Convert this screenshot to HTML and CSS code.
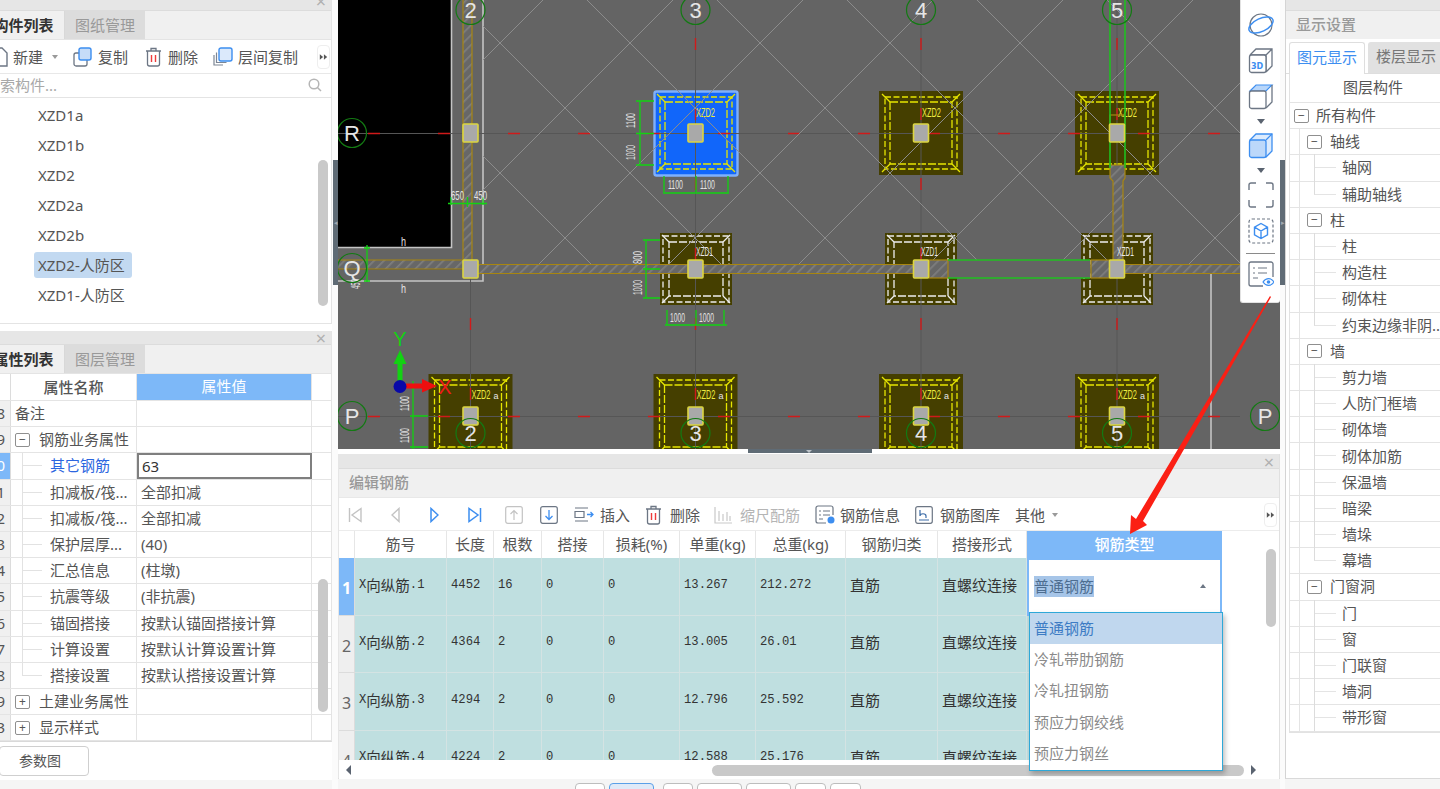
FILE: index.html
```html
<!DOCTYPE html>
<html lang="zh-CN">
<head>
<meta charset="utf-8">
<title>编辑钢筋</title>
<link rel="stylesheet" href="styles.css">
</head>
<body>
<div class="app">

  <aside class="left">
    <section class="panel comp-panel">
      <div class="strip strip-top"><span class="close">×</span></div>
      <div class="tabs">
        <div class="tab tab-on cut">构件列表</div>
        <div class="tab tab-off">图纸管理</div>
      </div>
      <div class="tools left-tools">
        <svg class="ic ic-new" viewBox="0 0 8 20"><path d="M-6 1H2l5 5v13H-6" fill="none" stroke="#6c7684" stroke-width="1.4"/></svg>
        <span class="tl">新建</span>
        <span class="tri"></span>
        <svg class="ic ic-copy" viewBox="0 0 19 20"><rect x="1" y="6" width="13" height="13" rx="2" fill="#fff" stroke="#6c7684" stroke-width="1.3"/><rect x="6" y="1" width="12" height="12" rx="2" fill="#c6dcf8" stroke="#3d8ef0" stroke-width="1.4"/></svg>
        <span class="tl">复制</span>
        <svg class="ic ic-trash" viewBox="0 0 17 20"><path d="M1 4h15M6 4V1.5h5V4M2.500 4v13a2 2 0 0 0 2 2h8a2 2 0 0 0 2-2V4" fill="none" stroke="#6c7684" stroke-width="1.3"/><path d="M6.500 8v7M10.500 8v7" stroke="#ee3a3a" stroke-width="1.4"/></svg>
        <span class="tl">删除</span>
        <svg class="ic ic-layer" viewBox="0 0 20 20"><path d="M1 8v10h9M3.500 5.500v10h10" fill="none" stroke="#7c8694" stroke-width="1.2"/><rect x="6" y="1" width="13" height="13" rx="2" fill="#dbe9fb" stroke="#3d8ef0" stroke-width="1.4"/></svg>
        <span class="tl">层间复制</span>
        <span class="more"><svg viewBox="0 0 11 7"><path d="M1 0L5 3.500L1 7ZM6 0L10 3.500L6 7Z" fill="#555"/></svg></span>
      </div>
      <div class="search">
        <span class="ph">搜索构件...</span>
        <svg class="ic-search" viewBox="0 0 14 14"><circle cx="6" cy="6" r="4.800" fill="none" stroke="#b5b5b5" stroke-width="1.5"/><path d="M9.500 9.500l3.500 3.500" stroke="#b5b5b5" stroke-width="1.5"/></svg>
      </div>
      <div class="comp-list">
        <div class="comp">XZD1a</div>
        <div class="comp">XZD1b</div>
        <div class="comp">XZD2</div>
        <div class="comp">XZD2a</div>
        <div class="comp">XZD2b</div>
        <div class="comp"><span class="chip">XZD2-人防区</span></div>
        <div class="comp">XZD1-人防区</div>
        <span class="thumb thumb-comp"></span>
      </div>
    </section>

    <section class="panel prop-panel">
      <div class="strip strip-prop"><span class="close">×</span></div>
      <div class="tabs">
        <div class="tab tab-on cut">属性列表</div>
        <div class="tab tab-off">图层管理</div>
      </div>
      <div class="props">
        <div class="prow phead"><div class="pn"></div><div class="pname pc">属性名称</div><div class="pval pv-head">属性值</div></div>
        <div class="prow"><div class="pn">8</div><div class="pname">备注</div><div class="pval"></div></div>
        <div class="prow"><div class="pn">9</div><div class="pname"><span class="tog">−</span><span class="gtext">钢筋业务属性</span></div><div class="pval"></div></div>
        <div class="prow"><div class="pn pn-on">0</div><div class="pname child first blue">其它钢筋</div><div class="pval pv-edit">63</div></div>
        <div class="prow"><div class="pn">1</div><div class="pname child">扣减板/筏...</div><div class="pval">全部扣减</div></div>
        <div class="prow"><div class="pn">2</div><div class="pname child">扣减板/筏...</div><div class="pval">全部扣减</div></div>
        <div class="prow"><div class="pn">3</div><div class="pname child">保护层厚...</div><div class="pval">(40)</div></div>
        <div class="prow"><div class="pn">4</div><div class="pname child">汇总信息</div><div class="pval">(柱墩)</div></div>
        <div class="prow"><div class="pn">5</div><div class="pname child">抗震等级</div><div class="pval">(非抗震)</div></div>
        <div class="prow"><div class="pn">6</div><div class="pname child">锚固搭接</div><div class="pval">按默认锚固搭接计算</div></div>
        <div class="prow"><div class="pn">7</div><div class="pname child">计算设置</div><div class="pval">按默认计算设置计算</div></div>
        <div class="prow"><div class="pn">8</div><div class="pname child last">搭接设置</div><div class="pval">按默认搭接设置计算</div></div>
        <div class="prow"><div class="pn">9</div><div class="pname"><span class="tog">+</span><span class="gtext">土建业务属性</span></div><div class="pval"></div></div>
        <div class="prow"><div class="pn">3</div><div class="pname"><span class="tog">+</span><span class="gtext">显示样式</span></div><div class="pval"></div></div>
        <span class="thumb thumb-prop"></span>
      </div>
    </section>
    <div class="btn-row"><button class="btn">参数图</button></div>
  </aside>

  <div class="gutter"><span class="grip">◂</span></div>

  <main class="center">
    <div class="viewport">
      <svg class="cad" viewBox="338 0 942 449" width="942" height="449">
        <defs>
          <pattern id="hatch" width="7" height="7" patternUnits="userSpaceOnUse" patternTransform="rotate(45)">
            <rect width="7" height="7" fill="#676767"/>
            <rect width="1.600" height="7" fill="#7f7f7f"/>
          </pattern>
          <clipPath id="latticeClip"><rect x="483" y="0" width="757" height="269"/></clipPath>
          <g id="marks2" fill="none" stroke="#e6e600" stroke-width="1.3">
            <rect x="-36" y="-36" width="72" height="72" stroke-dasharray="6 2.500"/>
            <rect x="-31" y="-31" width="62" height="62" stroke-dasharray="8 2"/>
            <path d="M-39-39l8 8M39-39l-8 8M-39 39l8-8M39 39l-8-8"/>
          </g>
          <g id="f2">
            <rect x="-42" y="-42" width="84" height="84" fill="#453f00"/>
            <use href="#marks2"/>
            <text class="lbl lbl-y" x="1" y="-16" textLength="19" lengthAdjust="spacingAndGlyphs">XZD2</text>
          </g>
          <g id="f2a">
            <rect x="-42" y="-42" width="84" height="84" fill="#453f00"/>
            <use href="#marks2"/>
            <text class="lbl lbl-y" x="1" y="-17" textLength="19" lengthAdjust="spacingAndGlyphs">XZD2</text>
            <text class="lbl lbl-a" x="23" y="-17">a</text>
          </g>
          <g id="f1">
            <rect x="-36" y="-36" width="72" height="72" fill="#453f00"/>
            <g fill="none" stroke="#eeeeee" stroke-width="1.300">
              <rect x="-33" y="-33" width="66" height="66" stroke-dasharray="6 2.500"/>
              <rect x="-27" y="-27" width="54" height="54" stroke-dasharray="8 2"/>
              <path d="M-34-34l7 7M34-34l-7 7M-34 34l7-7M34 34l-7-7"/>
            </g>
          </g>
          <rect id="col" x="-7.500" y="-9" width="15" height="18" rx="1" fill="#a9a9a9" stroke="#dcd640" stroke-width="1.600"/>
          <circle id="bub" r="14.500" fill="none" stroke="#137a13" stroke-width="1.200"/>
        </defs>

        <rect x="338" y="0" width="942" height="449" fill="#646464"/>

        <rect x="338" y="0" width="113" height="247" fill="#000"/>
        <path d="M451.500 0V247.500H338M483 0V281H338M1211 272V449" fill="none" stroke="#c4c4c4" stroke-width="1.600"/>

        <use href="#f2" x="921" y="133"/>
        <use href="#f2" x="1117" y="133"/>
        <use href="#f2a" x="470.500" y="416"/>
        <use href="#f2a" x="695.500" y="416"/>
        <use href="#f2a" x="921" y="416"/>
        <use href="#f2a" x="1117" y="416"/>
        <use href="#f1" x="696" y="269"/>
        <use href="#f1" x="921" y="269"/>
        <use href="#f1" x="1117" y="269"/>

        <rect x="654.500" y="91.500" width="83" height="84" rx="2" fill="#1166fa" stroke="#7fb0fb" stroke-width="2.400"/>
        <g transform="translate(696 133)">
          <use href="#marks2"/>
          <text class="lbl lbl-y" x="0" y="-16" textLength="19" lengthAdjust="spacingAndGlyphs">XZD2</text>
        </g>

        <path d="M338 133.500H1240M338 269.500H1240M338 416.500H1240M470.500 40V449M695.500 0V449M921 0V449M1117 0V449" stroke="#565656" stroke-width="1"/>
        <path d="M368 133.500H1240M368 416.500H1240M508 269.500H1240" stroke="#d01a1a" stroke-width="1.400" stroke-dasharray="12 58"/>
        <path d="M470.500 38V449M695.500 38V449M921 38V449M1117 38V449" stroke="#d01a1a" stroke-width="1.400" stroke-dasharray="12 58"/>

        <g clip-path="url(#latticeClip)" stroke="#8c8c8c" stroke-width="1" fill="none">
          <path d="M273 270L543 0M403 270L673 0M533 270L803 0M663 270L933 0M793 270L1063 0M923 270L1193 0M1053 270L1323 0M1183 270L1453 0"/>
          <path d="M327 0L597 270M457 0L727 270M587 0L857 270M717 0L987 270M847 0L1117 270M977 0L1247 270M1107 0L1377 270"/>
        </g>

        <rect x="463" y="0" width="9" height="269" fill="url(#hatch)"/>
        <rect x="338" y="260" width="132" height="9" fill="url(#hatch)"/>
        <rect x="470" y="264.500" width="770" height="9" fill="url(#hatch)"/>
        <rect x="948" y="260" width="142" height="18" fill="#646464"/>
        <path d="M463 0V260H338M472 0V269H338M472 264.500H948M472 273.500H948M1125 264.500H1240M1125 273.500H1240" fill="none" stroke="#a8860f" stroke-width="1.200"/>
        <rect x="929" y="260" width="19" height="18" fill="url(#hatch)" stroke="#a8860f" stroke-width="1.200"/>
        <rect x="1091" y="260" width="19" height="18" fill="url(#hatch)" stroke="#a8860f" stroke-width="1.200"/>
        <path d="M1113 260V181L1110 178V165H1125V178L1123 181V260Z" fill="url(#hatch)" stroke="#a8860f" stroke-width="1.200"/>
        <rect x="1110" y="115" width="15" height="10" fill="none" stroke="#a8860f" stroke-width="1.200"/>

        <path d="M1110 0V168M1125 0V168M948 260H1090M948 278H1090" stroke="#20c020" stroke-width="1.600" fill="none"/>

        <text class="lbl lbl-w" x="696" y="256" textLength="17" lengthAdjust="spacingAndGlyphs">XZD1</text>
        <text class="lbl lbl-w" x="921" y="256" textLength="17" lengthAdjust="spacingAndGlyphs">XZD1</text>
        <text class="lbl lbl-w" x="1117" y="256" textLength="17" lengthAdjust="spacingAndGlyphs">XZD1</text>

        <use href="#col" x="470.500" y="133"/>
        <use href="#col" x="470.500" y="269"/>
        <use href="#col" x="470.500" y="416"/>
        <use href="#col" x="695.500" y="133"/>
        <use href="#col" x="695.500" y="269"/>
        <use href="#col" x="695.500" y="416"/>
        <use href="#col" x="921" y="133"/>
        <use href="#col" x="921" y="269"/>
        <use href="#col" x="921" y="416"/>
        <use href="#col" x="1117" y="133"/>
        <use href="#col" x="1117" y="269"/>
        <use href="#col" x="1117" y="416"/>

        <g fill="none" stroke="#12d212" stroke-width="1.300">
          <path d="M640 101V165M636 101H654M636 133.500H654M636 165H654M664 176V192M696 176V192M728 176V192M663 193H729"/>
          <path d="M646 240V298M643 240H660M643 269H660M643 298H660M667 310V325M696 310V325M724 310V325M665 325H727"/>
          <path d="M451 205V197M483 205V197M448 203.500H487M467.500 197V207"/>
          <path d="M367 245V282M364 248H370M364 281H370"/>
          <path d="M413 381V449M410 416H428M410 447H428"/>
        </g>
        <g class="dim">
          <text x="668" y="189" textLength="15" lengthAdjust="spacingAndGlyphs">1100</text>
          <text x="700" y="189" textLength="15" lengthAdjust="spacingAndGlyphs">1100</text>
          <text x="670" y="322" textLength="15" lengthAdjust="spacingAndGlyphs">1000</text>
          <text x="699" y="322" textLength="15" lengthAdjust="spacingAndGlyphs">1000</text>
          <text x="451" y="200" textLength="13" lengthAdjust="spacingAndGlyphs">650</text>
          <text x="474" y="200" textLength="13" lengthAdjust="spacingAndGlyphs">450</text>
          <text x="-128" y="635" transform="rotate(-90)" textLength="15" lengthAdjust="spacingAndGlyphs">1100</text>
          <text x="-160" y="635" transform="rotate(-90)" textLength="15" lengthAdjust="spacingAndGlyphs">1000</text>
          <text x="-264" y="642" transform="rotate(-90)" textLength="13" lengthAdjust="spacingAndGlyphs">800</text>
          <text x="-295" y="642" transform="rotate(-90)" textLength="15" lengthAdjust="spacingAndGlyphs">1000</text>
          <text x="-411" y="409" transform="rotate(-90)" textLength="15" lengthAdjust="spacingAndGlyphs">1100</text>
          <text x="-443" y="409" transform="rotate(-90)" textLength="15" lengthAdjust="spacingAndGlyphs">1100</text>
          <text x="-289" y="360" transform="rotate(-90)" textLength="10" lengthAdjust="spacingAndGlyphs">450</text>
          <text x="401" y="246" textLength="5" lengthAdjust="spacingAndGlyphs">h</text>
          <text x="401" y="293" textLength="5" lengthAdjust="spacingAndGlyphs">h</text>
        </g>

        <g>
          <use href="#bub" x="470.500" y="10"/><use href="#bub" x="695.500" y="10"/>
          <use href="#bub" x="921" y="10"/><use href="#bub" x="1117" y="10"/>
          <use href="#bub" x="352" y="133"/><use href="#bub" x="352" y="268"/><use href="#bub" x="352" y="416"/>
          <use href="#bub" x="470.500" y="433"/><use href="#bub" x="695.500" y="433"/>
          <use href="#bub" x="921" y="433"/><use href="#bub" x="1117" y="433"/>
          <use href="#bub" x="1265" y="416"/>
        </g>
        <g class="axis">
          <text x="470.500" y="18">2</text><text x="695.500" y="18">3</text>
          <text x="921" y="18">4</text><text x="1117" y="18">5</text>
          <text x="352" y="141">R</text><text x="352" y="276">Q</text><text x="352" y="424">P</text>
          <text x="470.500" y="441">2</text><text x="695.500" y="441">3</text>
          <text x="921" y="441">4</text><text x="1117" y="441">5</text>
          <text x="1265" y="424">P</text>
        </g>

        <path d="M397.500 382V364H393.500L400 350L406.500 364H402.500V382Z" fill="#12d212"/>
        <path d="M406 383.500H422V379L437 386L422 392.500V388.500H406Z" fill="#ee0f0f"/>
        <circle cx="400" cy="386.500" r="6.500" fill="#0808a8"/>
        <text class="cs cs-y" x="400" y="346">Y</text>
        <text class="cs cs-x" x="445" y="394">X</text>
      </svg>

      <div class="viewtools">
        <svg class="vi" viewBox="0 0 26 26"><circle cx="13" cy="13" r="11" fill="none" stroke="#6c7684" stroke-width="1.200"/><ellipse cx="13" cy="13" rx="13" ry="6.500" transform="rotate(-25 13 13)" fill="none" stroke="#3d8ef0" stroke-width="1.500"/></svg>
        <svg class="vi" viewBox="0 0 26 26"><path d="M2 7L8 1H24V18L18 24M18 7L24 1M2 7H18V24" fill="none" stroke="#6c7684" stroke-width="1.300"/><rect x="1.500" y="7" width="16.500" height="17.500" rx="2" fill="#fff" stroke="#6c7684" stroke-width="1.300"/><text class="vi3d" x="3" y="21">3D</text></svg>
        <svg class="vi" viewBox="0 0 26 26"><path d="M2 7L8 1H24L18 7Z" fill="#b8d6fa" stroke="#3d8ef0" stroke-width="1.200"/><path d="M24 1V18L18 24" fill="none" stroke="#6c7684" stroke-width="1.300"/><rect x="1.500" y="7" width="16.500" height="17.500" rx="2" fill="#fff" stroke="#6c7684" stroke-width="1.300"/></svg>
        <span class="vtri"></span>
        <svg class="vi" viewBox="0 0 26 26"><path d="M2 7L8 1H24V18L18 24Z" fill="#dcebfd" stroke="#3d8ef0" stroke-width="1.300"/><path d="M18 7L24 1" stroke="#3d8ef0" stroke-width="1.200"/><rect x="1.500" y="7" width="16.500" height="17.500" rx="2" fill="#bcd8fa" stroke="#3d8ef0" stroke-width="1.300"/></svg>
        <span class="vtri"></span>
        <svg class="vi" viewBox="0 0 26 26"><path d="M1 8V3a2 2 0 0 1 2-2h5M18 1h5a2 2 0 0 1 2 2v5M25 18v5a2 2 0 0 1-2 2h-5M8 25H3a2 2 0 0 1-2-2v-5" fill="none" stroke="#6c7684" stroke-width="1.400"/></svg>
        <svg class="vi" viewBox="0 0 26 26"><rect x="1" y="1" width="24" height="24" rx="3" fill="none" stroke="#6c7684" stroke-width="1.200" stroke-dasharray="3 2"/><path d="M13 5.500L19.500 9.200V16.800L13 20.500L6.500 16.800V9.200ZM6.500 9.200L13 13L19.500 9.200M13 13V20.500" fill="none" stroke="#3d8ef0" stroke-width="1.400"/></svg>
        <span class="vline"></span>
        <svg class="vi" viewBox="0 0 26 26"><path d="M25 16V3a2 2 0 0 0-2-2H3a2 2 0 0 0-2 2v20a2 2 0 0 0 2 2h12" fill="none" stroke="#6c7684" stroke-width="1.300"/><path d="M5 7h2M10 7h9M5 12h2M10 12h9M5 17h5" stroke="#6c7684" stroke-width="1.200"/><path d="M15 21c3-4.500 8-4.500 11 0c-3 4.500-8 4.500-11 0Z" fill="#fff" stroke="#3d8ef0" stroke-width="1.200"/><circle cx="20.500" cy="21" r="1.800" fill="#3d8ef0"/></svg>
      </div>
    </div>

    <div class="sash"><span class="sash-bar"><span class="sash-tri"></span></span></div>

    <section class="editor">
      <div class="strip strip-ed"><span class="close">×</span></div>
      <div class="ed-title">编辑钢筋</div>
      <div class="tools ed-tools">
        <svg class="ic nav-first" viewBox="0 0 14 16"><path d="M1.500 1V15M13 1.500V14.500L4 8Z" fill="none" stroke="#c3c3c3" stroke-width="1.400"/></svg>
        <svg class="ic nav-prev" viewBox="0 0 9 16"><path d="M8 1.500V14.500L1 8Z" fill="none" stroke="#c3c3c3" stroke-width="1.400"/></svg>
        <svg class="ic nav-next" viewBox="0 0 9 16"><path d="M1 1.500V14.500L8 8Z" fill="none" stroke="#3d8ef0" stroke-width="1.500"/></svg>
        <svg class="ic nav-last" viewBox="0 0 14 16"><path d="M12.500 1V15M1 1.500V14.500L10 8Z" fill="none" stroke="#3d8ef0" stroke-width="1.500"/></svg>
        <svg class="ic nav-up" viewBox="0 0 18 18"><rect x=".7" y=".7" width="16.600" height="16.600" rx="2" fill="none" stroke="#c3c3c3" stroke-width="1.200"/><path d="M9 14V5M5.500 8L9 4.500L12.500 8" fill="none" stroke="#c3c3c3" stroke-width="1.200"/></svg>
        <svg class="ic nav-down" viewBox="0 0 18 18"><rect x=".7" y=".7" width="16.600" height="16.600" rx="2" fill="none" stroke="#6c7684" stroke-width="1.200"/><path d="M9 4V13M5.500 10L9 13.500L12.500 10" fill="none" stroke="#3d8ef0" stroke-width="1.300"/></svg>
        <svg class="ic ic-ins" viewBox="0 0 20 15"><path d="M1 1H14M1 14H14M1 4.500H10V10.500H1Z" fill="none" stroke="#6c7684" stroke-width="1.200"/><path d="M13 7.500H19M16.500 5L19 7.500L16.500 10" fill="none" stroke="#3d8ef0" stroke-width="1.300"/></svg>
        <span class="tl tl-ins">插入</span>
        <svg class="ic ic-trash2" viewBox="0 0 17 20"><path d="M1 4h15M6 4V1.500h5V4M2.500 4v13a2 2 0 0 0 2 2h8a2 2 0 0 0 2-2V4" fill="none" stroke="#6c7684" stroke-width="1.300"/><path d="M6.500 8v7M10.500 8v7" stroke="#ee3a3a" stroke-width="1.400"/></svg>
        <span class="tl tl-del">删除</span>
        <svg class="ic ic-scale" viewBox="0 0 18 18"><path d="M1 1V17H18M5 5V15M9 8V15M13 6V15M16 10V15" fill="none" stroke="#c9c9c9" stroke-width="1.200"/></svg>
        <span class="tl tl-off">缩尺配筋</span>
        <svg class="ic ic-info" viewBox="0 0 20 19"><path d="M18 10V3a2 2 0 0 0-2-2H3a2 2 0 0 0-2 2v13a2 2 0 0 0 2 2h8" fill="none" stroke="#6c7684" stroke-width="1.200"/><path d="M4 6h2M8 6h7M4 10h2M8 10h7M4 14h4" stroke="#6c7684" stroke-width="1.100"/><circle cx="16" cy="15" r="3.500" fill="#3d8ef0"/></svg>
        <span class="tl tl-info">钢筋信息</span>
        <svg class="ic ic-gal" viewBox="0 0 18 18"><rect x=".7" y=".7" width="16.600" height="16.600" rx="2" fill="none" stroke="#6c7684" stroke-width="1.200"/><path d="M5 4V10C5 7 11 7 11 10V12M4 14H14" fill="none" stroke="#3d6da8" stroke-width="1.200"/></svg>
        <span class="tl tl-gal">钢筋图库</span>
        <span class="tl tl-oth">其他</span>
        <span class="tri tri-oth"></span>
        <span class="more more-ed"><svg viewBox="0 0 11 7"><path d="M1 0L5 3.500L1 7ZM6 0L10 3.500L6 7Z" fill="#555"/></svg></span>
      </div>

      <div class="grid-wrap">
        <div class="grow ghead">
          <div></div><div>筋号</div><div>长度</div><div>根数</div><div>搭接</div><div>损耗(%)</div><div>单重(kg)</div><div>总重(kg)</div><div>钢筋归类</div><div>搭接形式</div><div class="gh-on">钢筋类型</div>
        </div>
        <div class="grow gbody">
          <div class="gn gn-on">1</div><div class="m"><i>X</i><span class="cn">向纵筋</span><i>.1</i></div><div class="m">4452</div><div class="m">16</div><div class="m">0</div><div class="m">0</div><div class="m">13.267</div><div class="m">212.272</div><div class="cj">直筋</div><div class="cj">直螺纹连接</div>
          <div class="editcell"><span class="sel">普通钢筋</span><span class="uptri"></span></div>
        </div>
        <div class="grow gbody">
          <div class="gn">2</div><div class="m"><i>X</i><span class="cn">向纵筋</span><i>.2</i></div><div class="m">4364</div><div class="m">2</div><div class="m">0</div><div class="m">0</div><div class="m">13.005</div><div class="m">26.01</div><div class="cj">直筋</div><div class="cj">直螺纹连接</div><div></div>
        </div>
        <div class="grow gbody">
          <div class="gn">3</div><div class="m"><i>X</i><span class="cn">向纵筋</span><i>.3</i></div><div class="m">4294</div><div class="m">2</div><div class="m">0</div><div class="m">0</div><div class="m">12.796</div><div class="m">25.592</div><div class="cj">直筋</div><div class="cj">直螺纹连接</div><div></div>
        </div>
        <div class="grow gbody">
          <div class="gn">4</div><div class="m"><i>X</i><span class="cn">向纵筋</span><i>.4</i></div><div class="m">4224</div><div class="m">2</div><div class="m">0</div><div class="m">0</div><div class="m">12.588</div><div class="m">25.176</div><div class="cj">直筋</div><div class="cj">直螺纹连接</div><div></div>
        </div>
        <span class="thumb thumb-v"></span>
      </div>

      <div class="hscroll">
        <span class="harrow harrow-l"></span>
        <span class="hthumb"></span>
        <span class="harrow harrow-r"></span>
      </div>

      <ul class="drop">
        <li class="drop-on">普通钢筋</li>
        <li>冷轧带肋钢筋</li>
        <li>冷轧扭钢筋</li>
        <li>预应力钢绞线</li>
        <li>预应力钢丝</li>
      </ul>
    </section>

    <div class="floors">
      <span class="fl fl-a"></span><span class="fl fl-on"></span><span class="fl fl-a"></span><span class="fl fl-b"></span><span class="fl fl-b"></span><span class="fl fl-c"></span><span class="fl fl-c"></span>
    </div>
  </main>

  <div class="gutter gutter-r"><span class="grip">▸</span></div>

  <aside class="right">
    <div class="strip strip-top"></div>
    <div class="rt-title">显示设置</div>
    <div class="rt-tabs">
      <div class="rt-tab rt-on">图元显示</div>
      <div class="rt-tab">楼层显示</div>
    </div>
    <div class="tree">
      <div class="thead">图层构件</div>
      <div class="t t0"><span class="tog">−</span>所有构件</div>
      <div class="t t1"><span class="tog">−</span>轴线</div>
      <div class="t t2">轴网</div>
      <div class="t t2 end">辅助轴线</div>
      <div class="t t1"><span class="tog">−</span>柱</div>
      <div class="t t2">柱</div>
      <div class="t t2">构造柱</div>
      <div class="t t2">砌体柱</div>
      <div class="t t2 end">约束边缘非阴...</div>
      <div class="t t1"><span class="tog">−</span>墙</div>
      <div class="t t2">剪力墙</div>
      <div class="t t2">人防门框墙</div>
      <div class="t t2">砌体墙</div>
      <div class="t t2">砌体加筋</div>
      <div class="t t2">保温墙</div>
      <div class="t t2">暗梁</div>
      <div class="t t2">墙垛</div>
      <div class="t t2 end">幕墙</div>
      <div class="t t1"><span class="tog">−</span>门窗洞</div>
      <div class="t t2">门</div>
      <div class="t t2">窗</div>
      <div class="t t2">门联窗</div>
      <div class="t t2">墙洞</div>
      <div class="t t2">带形窗</div>
    </div>
  </aside>
</div>

<svg class="redarrow" viewBox="0 0 1440 789" width="1440" height="789">
  <polygon points="1270,296 1271,297 1143,521 1147,525 1130,534 1131,515 1136,519" fill="#fb1f14"/>
</svg>
</body>
</html>
```

FILE: styles.css
```css
* { box-sizing: border-box; }
html, body { margin: 0; height: 100%; overflow: hidden; }
body {
  background: #f5f5f5;
  color: #444;
  font: 15px/20px "Noto Sans", "Noto Sans CJK SC", sans-serif;
}
.app { display: flex; width: 1440px; height: 789px; overflow: hidden; position: relative; }

/* shared */
.strip { background: #e6e6e6; position: relative; border-bottom: 1px solid #dcdcdc; }
.strip-top { height: 11px; }
.strip-prop { height: 14px; }
.strip-ed { height: 15px; }
.close { position: absolute; right: 2px; bottom: -3px; font-size: 18px; line-height: 18px; color: #b0b0b0; width: 16px; text-align: center; }
.strip-top .close { bottom: 0; }
.strip-prop .close { bottom: -3px; }
.tools { display: flex; align-items: center; background: #fff; }
.ic { display: block; flex: none; }
.tl { flex: none; color: #555; }
.tri { width: 0; height: 0; border: 3px solid transparent; border-top: 4px solid #9a9a9a; border-bottom: 0; flex: none; }
.more { flex: none; border: 1px solid #eeeeee; border-radius: 4px; height: 24px; width: 13px; display: flex; align-items: center; justify-content: center; }
.more svg { width: 9px; height: 6px; display: block; }
.thumb { position: absolute; width: 10px; background: #c9c9c9; border-radius: 5px; }

/* left */
.left { width: 332px; flex: none; background: #fff; height: 780px; overflow: hidden; }
.panel { border-right: 1px solid #e4e4e4; }
.comp-panel { height: 324px; border-bottom: 1px solid #e4e4e4; margin-bottom: 7px; }
.prop-panel { height: 411px; border-bottom: 1px solid #d9d9d9; }
.tabs { display: flex; height: 29px; background: #f0f0f0; border-bottom: 1px solid #e4e4e4; }
.tab { height: 28px; line-height: 28px; text-align: center; }
.tab-on { width: 65px; color: #333; font-weight: 700; border-right: 1px solid #d8d8d8; }
.cut { text-indent: -17px; white-space: nowrap; overflow: hidden; }
.tab-off { width: 80px; background: #dcdcdc; color: #999; }
.left-tools { height: 34px; border-bottom: 1px solid #e8e8e8; }
.ic-new { width: 8px; height: 20px; }
.left-tools .tl:nth-of-type(1) { margin-left: 5px; }
.left-tools .tri { margin-left: 9px; }
.ic-copy { width: 19px; height: 20px; margin-left: 15px; }
.ic-copy + .tl { margin-left: 6px; }
.ic-trash { width: 17px; height: 20px; margin-left: 17px; }
.ic-trash + .tl { margin-left: 6px; }
.ic-layer { width: 20px; height: 20px; margin-left: 15px; }
.ic-layer + .tl { margin-left: 5px; }
.left-tools .more { margin-left: 19px; }
.search { height: 24px; display: flex; align-items: center; justify-content: space-between; border-bottom: 1px solid #e4e4e4; padding: 0 9px 1px 0; overflow: hidden; }
.ph { color: #a8a8a8; margin-left: -15px; font-size: 15px; }
.ic-search { width: 14px; height: 14px; }
.comp-list { height: 226px; padding: 2px 0 0 38px; position: relative; }
.comp { height: 30px; line-height: 30px; color: #555; }
.chip { display: inline-block; background: #c2d9f1; border-radius: 3px; height: 26px; line-height: 26px; padding: 0 4px; margin-left: -4px; width: 98px; }
.thumb-comp { left: 318px; top: 62px; height: 146px; }

.props { position: relative; height: 367px; }
.prow { display: flex; height: 26.2px; border-bottom: 1px solid #e4e4e4; }
.phead { height: 27px; }
.pn { width: 11px; flex: none; background: #f0f0f0; border-right: 1px solid #dcdcdc; text-align: right; padding-right: 5px; line-height: 25px; overflow: hidden; color: #555; direction: rtl; }
.pn-on { background: #7db8f8; color: #fff; }
.phead .pn { background: #fff; }
.pname { width: 126px; flex: none; border-right: 1px solid #e4e4e4; padding-left: 4px; line-height: 25px; white-space: nowrap; position: relative; overflow: hidden; display: flex; align-items: center; color: #555; }
.pc { justify-content: center; padding: 0; font-weight: 500; }
.pval { width: 175px; flex: none; border-right: 1px solid #e4e4e4; padding-left: 4px; line-height: 25px; white-space: nowrap; color: #555; }
.pv-head { background: #7db8f8; color: #fff; text-align: center; padding: 0; height: 26px; }
.pv-edit { border: 2px solid #7f7f7f; padding-left: 3px; line-height: 22px; color: #333; }
.tog { width: 15px; height: 14px; border: 1px solid #8f8f8f; border-radius: 2px; display: inline-flex; align-items: center; justify-content: center; flex: none; line-height: 10px; font-size: 12px; background: #fff; color: #555; position: relative; z-index: 1; }
.gtext { margin-left: 9px; }
.child { padding-left: 39px; }
.child::before { content: ""; position: absolute; left: 11px; top: -1px; bottom: -1px; border-left: 1px solid #e2e2e2; }
.child.last::before { bottom: 12px; }
.child::after { content: ""; position: absolute; left: 11px; top: 12px; width: 20px; border-top: 1px solid #e2e2e2; }
.blue { color: #2c66e0; }
.thumb-prop { left: 318px; top: 205px; height: 133px; }
.btn-row { padding-top: 4px; }
.btn { display: block; width: 90px; height: 30px; margin-left: -1px; background: #fff; border: 1px solid #cfcfcf; border-radius: 4px; font: inherit; font-size: 14px; color: #555; padding: 0 8px 0 0; }

/* splitter gutters */
.gutter { width: 6px; flex: none; background: #fbfbfb; padding-top: 160px; }
.gutter-r { width: 5px; }
.grip { display: block; height: 125px; width: 5px; margin-left: 1px; background: #5f6b75; color: #a0a8b0; font-size: 7px; line-height: 125px; text-align: center; overflow: hidden; }
.gutter-r .grip { margin-left: 0; }

/* center */
.center { width: 942px; flex: none; display: flex; flex-direction: column; }
.viewport { height: 449px; position: relative; overflow: hidden; flex: none; }
.cad { display: block; }
.lbl { font: 13px "Liberation Sans", sans-serif; }
.lbl-y { fill: #efec40; }
.lbl-w { fill: #e8e8e8; }
.lbl-a { fill: #e8e8e8; font-size: 9px; }
.dim text { font: 13px "Liberation Sans", sans-serif; fill: #e4e4e4; }
.axis text { font: 22px "Liberation Sans", sans-serif; fill: #e6e6e6; text-anchor: middle; }
.cs { font: 20px "Liberation Sans", sans-serif; text-anchor: middle; }
.cs-y { fill: #12d212; }
.cs-x { fill: #ee1a1a; }
.viewtools { position: absolute; right: 0; top: 0; width: 40px; height: 303px; background: #fff; border: 1px solid #e2e2e2; border-top: 0; border-right: 0; border-radius: 0 0 3px 3px; display: flex; flex-direction: column; align-items: center; padding-top: 12px; }
.vi { width: 26px; height: 26px; flex: none; margin-bottom: 10px; margin-left: 1px; display: block; }
.vi3d { font: 700 8px "DejaVu Sans", sans-serif; fill: #3d8ef0; }
.vtri { width: 0; height: 0; border: 4px solid transparent; border-top: 5px solid #5a6370; border-bottom: 0; margin: -1px 0 9px; flex: none; }
.vline { width: 29px; border-top: 1px solid #8a8a8a; margin: -1px 0 7px; flex: none; }
.sash { height: 5px; background: #fff; flex: none; padding-left: 410px; }
.sash-bar { display: block; width: 124px; height: 4px; background: #5f6b75; position: relative; }
.sash-tri { position: absolute; left: 58px; top: 1px; border: 3px solid transparent; border-top: 3px solid #bcc2c8; border-bottom: 0; }

.editor { height: 325px; position: relative; border-right: 1px solid #e0e0e0; border-bottom: 1px solid #d9d9d9; border-left: 1px solid #e6e6e6; flex: none; background: #fff; }
.ed-title { height: 28px; background: #f0f0f0; color: #999; line-height: 26px; padding-left: 10px; font-weight: 500; }
.ed-tools { height: 34px; border-bottom: 1px solid #ececec; border-top: 1px solid #e8e8e8; padding-top: 1px; }
.nav-first { width: 14px; height: 16px; margin-left: 9px; }
.nav-prev { width: 9px; height: 16px; margin-left: 29px; }
.nav-next { width: 9px; height: 16px; margin-left: 30px; }
.nav-last { width: 14px; height: 16px; margin-left: 29px; }
.nav-up { width: 18px; height: 18px; margin-left: 23px; }
.nav-down { width: 18px; height: 18px; margin-left: 17px; }
.ic-ins { width: 20px; height: 15px; margin-left: 16px; }
.tl-ins { margin-left: 6px; }
.ic-trash2 { width: 17px; height: 20px; margin-left: 15px; }
.tl-del { margin-left: 8px; }
.ic-scale { width: 18px; height: 18px; margin-left: 14px; }
.tl-off { margin-left: 8px; color: #b5b5b5; }
.ic-info { width: 20px; height: 19px; margin-left: 15px; }
.tl-info { margin-left: 5px; }
.ic-gal { width: 18px; height: 18px; margin-left: 15px; }
.tl-gal { margin-left: 7px; }
.tl-oth { margin-left: 15px; }
.tri-oth { margin-left: 7px; }
.more-ed { margin-left: 206px; }

.grid-wrap { height: 229px; overflow: hidden; position: relative; }
.grow { display: grid; grid-template-columns: 16px 92px 47px 48px 62px 76px 76px 90px 92px 89px 195px; width: 883px; }
.ghead { height: 27px; text-align: center; line-height: 26px; color: #555; }
.ghead > div { border-right: 1px solid #e6e6e6; height: 27px; white-space: nowrap; }
.ghead .gh-on { background: #7db8f8; color: #fff; border: 0; font-weight: 500; }
.gbody { height: 57.5px; }
.gbody > div { background: #bfdfe0; border-right: 1px solid #d4e3e3; border-bottom: 1px solid #d4e3e3; display: flex; align-items: center; padding: 0 0 3px 4px; white-space: nowrap; color: #333; overflow: hidden; }
.gbody > div:last-child { padding: 0; border-right: 0; }
.gbody > .gn { background: #efefef; color: #666; justify-content: center; padding: 4px 0 0; font-size: 16px; border-right: 1px solid #dcdcdc; border-bottom: 1px solid #dcdcdc; }
.gbody > .gn-on { background: #7db8f8; color: #fff; font-weight: 700; }
.m { font: 12.2px/16px "Liberation Mono", monospace; }
.m i { font-style: normal; }
.cn { font: 14.5px/16px "Noto Sans CJK SC", sans-serif; }
.gbody > .cj { font-size: 15px; }
.gbody > div.editcell.editcell { background: #fff; border: 2px solid #7db8f8; padding: 0 0 1px 5px; display: flex; align-items: center; justify-content: space-between; }
.sel { background: #a6c5e8; color: #4d6d90; padding: 0; line-height: 21px; }
.uptri { border: 3px solid transparent; border-bottom: 4px solid #6c7684; border-top: 0; margin-right: 14px; }
.thumb-v { left: 927px; top: 18px; height: 78px; }

.hscroll { height: 19px; background: #fff; display: flex; align-items: center; padding: 1px 0 0 7px; }
.harrow { width: 0; height: 0; border: 5px solid transparent; flex: none; }
.harrow-l { border-right: 5px solid #5a6370; border-left: 0; }
.hthumb { width: 532px; height: 11px; background: #c9c9c9; border-radius: 6px; margin-left: 361px; flex: none; }
.harrow-r { border-left: 5px solid #5a6370; border-right: 0; margin-left: 7px; }

.drop { position: absolute; left: 690px; top: 158px; width: 194px; height: 159px; margin: 0; padding: 0; list-style: none; background: #fff; border: 1px solid #2ea8d8; box-shadow: 2px 3px 5px rgba(0, 0, 0, .25); }
.drop li { height: 31.2px; line-height: 31px; padding-left: 4px; color: #8a8a8a; }
.drop .drop-on { background: #c0d7ee; color: #3d7cc4; }

.floors { display: flex; padding: 4px 0 0 237px; }
.fl { display: block; height: 10px; width: 30px; margin-right: 4px; background: #fff; border: 1px solid #bdbdbd; border-radius: 4px 4px 0 0; flex: none; }
.fl-on { width: 45px; margin-right: 9px; background: #dfeaf8; border-color: #5aa0e8; }
.fl-b { width: 45px; }
.fl-c { width: 31px; }

/* right */
.right { width: 155px; flex: none; background: #fff; border-left: 1px solid #d4d4d4; height: 779px; overflow: hidden; border-bottom: 1px solid #d9d9d9; }
.rt-title { height: 28px; background: #f0f0f0; color: #999; line-height: 26px; padding-left: 10px; font-weight: 500; }
.rt-tabs { display: flex; height: 35px; padding: 3px 0 0 3px; border-bottom: 1px solid #dedede; }
.rt-tab { width: 76px; flex: none; height: 31px; line-height: 28px; text-align: center; background: #e1e1e1; color: #777; margin-right: 3px; white-space: nowrap; border-radius: 3px 3px 0 0; }
.rt-on { background: #fff; color: #3d8ef0; border: 1px solid #dedede; border-bottom: 0; height: 32px; }
.tree { margin-left: 3px; border-left: 1px solid #e2e2e2; border-bottom: 1px solid #e2e2e2; height: 659px; width: 170px; }
.thead { height: 29px; line-height: 27px; text-align: center; border-bottom: 1px solid #e4e4e4; width: 166px; color: #555; }
.t { height: 26.2px; line-height: 25px; border-bottom: 1px solid #e4e4e4; position: relative; display: flex; align-items: center; color: #555; white-space: nowrap; }
.t0 { padding-left: 4px; }
.t0 .tog { margin-right: 7px; }
.t1 { padding-left: 17px; }
.t1 .tog { margin-right: 8px; }
.t1::before { content: ""; position: absolute; left: 9px; top: -1px; bottom: -1px; border-left: 1px solid #e4e4e4; }
.t2 { padding-left: 52px; }
.t2::before { content: ""; position: absolute; left: 9px; top: -1px; bottom: -1px; border-left: 1px solid #e4e4e4; }
.t2::after { content: ""; position: absolute; left: 24px; top: -1px; height: 13px; width: 21px; border-left: 1px solid #dcdcdc; border-bottom: 1px solid #e4e4e4; }
.t2:not(.end)::after { height: 26.2px; border-bottom: 0; background: linear-gradient(#e4e4e4, #e4e4e4) left 13px / 100% 1px no-repeat; }

.redarrow { position: absolute; left: 0; top: 0; pointer-events: none; }
```
